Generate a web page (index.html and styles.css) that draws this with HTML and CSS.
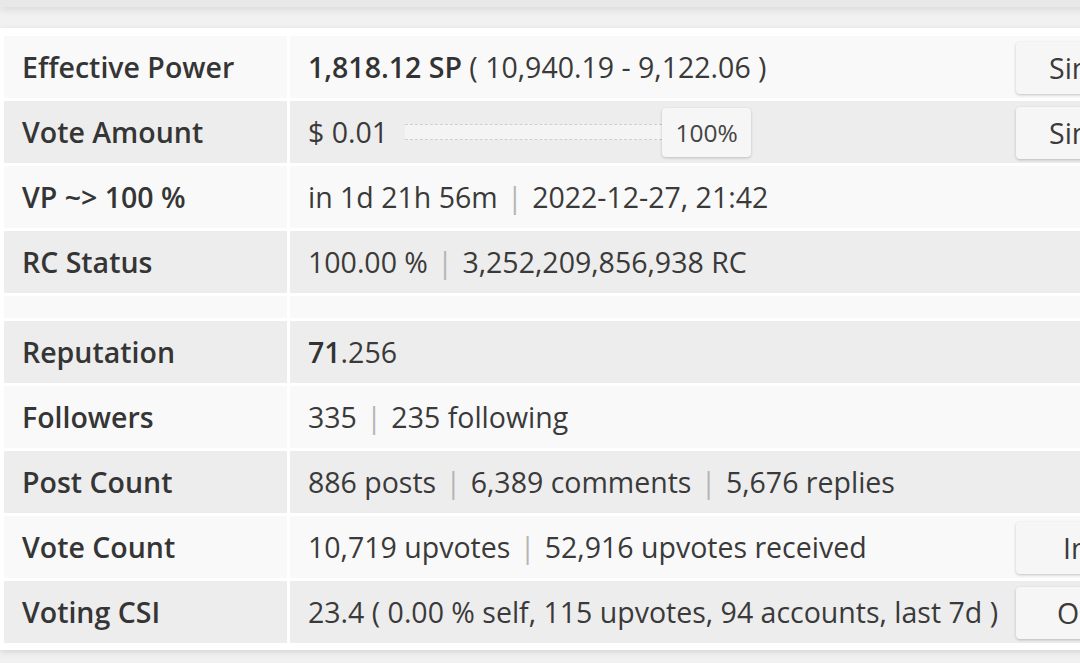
FILE: index.html
```html
<!DOCTYPE html>
<html>
<head>
<meta charset="utf-8">
<link rel="stylesheet" href="styles.css">
</head>
<body>
<div class="prev-card"></div>
<div class="card">
  <div class="grid">
    <div class="row light">
      <div class="label">Effective Power</div>
      <div class="value"><span class="txt"><b>1,818.12 SP</b> ( 10,940.19 - 9,122.06 )</span><button class="btn btn-sim">Simulate</button></div>
    </div>
    <div class="row dark">
      <div class="label">Vote Amount</div>
      <div class="value"><span class="txt">$ 0.01</span>
        <div class="slider"><div class="track"></div><div class="handle">100%</div></div>
        <button class="btn btn-sim">Simulate</button></div>
    </div>
    <div class="row light">
      <div class="label">VP ~&gt; 100 %</div>
      <div class="value"><span class="txt">in 1d 21h 56m <span class="sep">|</span> 2022-12-27, 21:42</span></div>
    </div>
    <div class="row dark">
      <div class="label">RC Status</div>
      <div class="value"><span class="txt">100.00 % <span class="sep">|</span> 3,252,209,856,938 RC</span></div>
    </div>
    <div class="row light blank">
      <div class="label"></div>
      <div class="value"></div>
    </div>
    <div class="row dark">
      <div class="label">Reputation</div>
      <div class="value"><span class="txt"><b>71</b>.256</span></div>
    </div>
    <div class="row light">
      <div class="label">Followers</div>
      <div class="value"><span class="txt">335 <span class="sep">|</span> 235 following</span></div>
    </div>
    <div class="row dark">
      <div class="label">Post Count</div>
      <div class="value"><span class="txt">886 posts <span class="sep">|</span> 6,389 comments <span class="sep">|</span> 5,676 replies</span></div>
    </div>
    <div class="row light">
      <div class="label">Vote Count</div>
      <div class="value"><span class="txt">10,719 upvotes <span class="sep">|</span> 52,916 upvotes received</span><button class="btn btn-in">Incoming</button></div>
    </div>
    <div class="row dark">
      <div class="label">Voting CSI</div>
      <div class="value"><span class="txt">23.4 ( 0.00 % self, 115 upvotes, 94 accounts, last 7d )</span><button class="btn btn-out">Outgoing</button></div>
    </div>
  </div>
</div>
</body>
</html>
```
FILE: styles.css
```css
html, body {
  margin: 0;
  padding: 0;
  overflow: hidden;
}
body {
  background: #f1f1f1;
  font-family: "Open Sans", "Liberation Sans", sans-serif;
  color: #333;
  width: 1080px;
  height: 663px;
}
.prev-card {
  height: 7px;
  width: 1200px;
  background: #e8e8e8;
  box-shadow: 0 2px 8px rgba(0, 0, 0, 0.12);
}
.card {
  margin-top: 21px;
  width: 1200px;
  background: #fff;
  padding: 8px 0 7px 4px;
  box-shadow: 0 2px 6px rgba(0, 0, 0, 0.12);
}
.grid {
  display: flex;
  flex-direction: column;
  gap: 3px;
}
.row {
  display: grid;
  grid-template-columns: 283px 852px;
  column-gap: 3px;
  height: 62px;
}
.row.blank {
  height: 22px;
}
.light > div { background: #f9f9f9; }
.dark > div { background: #ededed; }
.label {
  display: flex;
  align-items: center;
  padding-left: 18px;
  font-size: 28.5px;
  font-weight: 600;
  color: #353535;
}
.value {
  display: flex;
  align-items: center;
  padding-left: 18px;
  padding-right: 6px;
  font-size: 28.5px;
  color: #3a3a3a;
}
.txt {
  white-space: nowrap;
}
.value b {
  font-weight: 600;
  color: #333;
}
.sep {
  color: #b5b5b5;
  margin: 0 2px;
}
.btn {
  margin-left: auto;
  width: 120px;
  height: 52px;
  margin-top: 2px;
  background: #f6f6f6;
  border: none;
  border-radius: 4px;
  box-shadow: 0 1px 3px rgba(0, 0, 0, 0.22);
  font-family: "Open Sans", "Liberation Sans", sans-serif;
  font-size: 28.5px;
  color: #3a3a3a;
  text-align: left;
  padding: 0 0 0 33px;
  white-space: nowrap;
  overflow: hidden;
}
.btn-in {
  padding-left: 47px;
}
.btn-out {
  padding-left: 41px;
}
.slider {
  display: flex;
  align-items: center;
  margin-left: 17px;
}
.track {
  width: 257px;
  height: 14px;
  background: #f4f4f4;
  border-top: 1px dashed #cfcfcf;
  border-bottom: 1px dashed #cfcfcf;
}
.handle {
  width: 89px;
  height: 49px;
  display: flex;
  align-items: center;
  justify-content: center;
  background: #f6f6f6;
  border-radius: 4px;
  box-shadow: 0 1px 3px rgba(0, 0, 0, 0.2);
  font-size: 24.5px;
  color: #444;
}
```
